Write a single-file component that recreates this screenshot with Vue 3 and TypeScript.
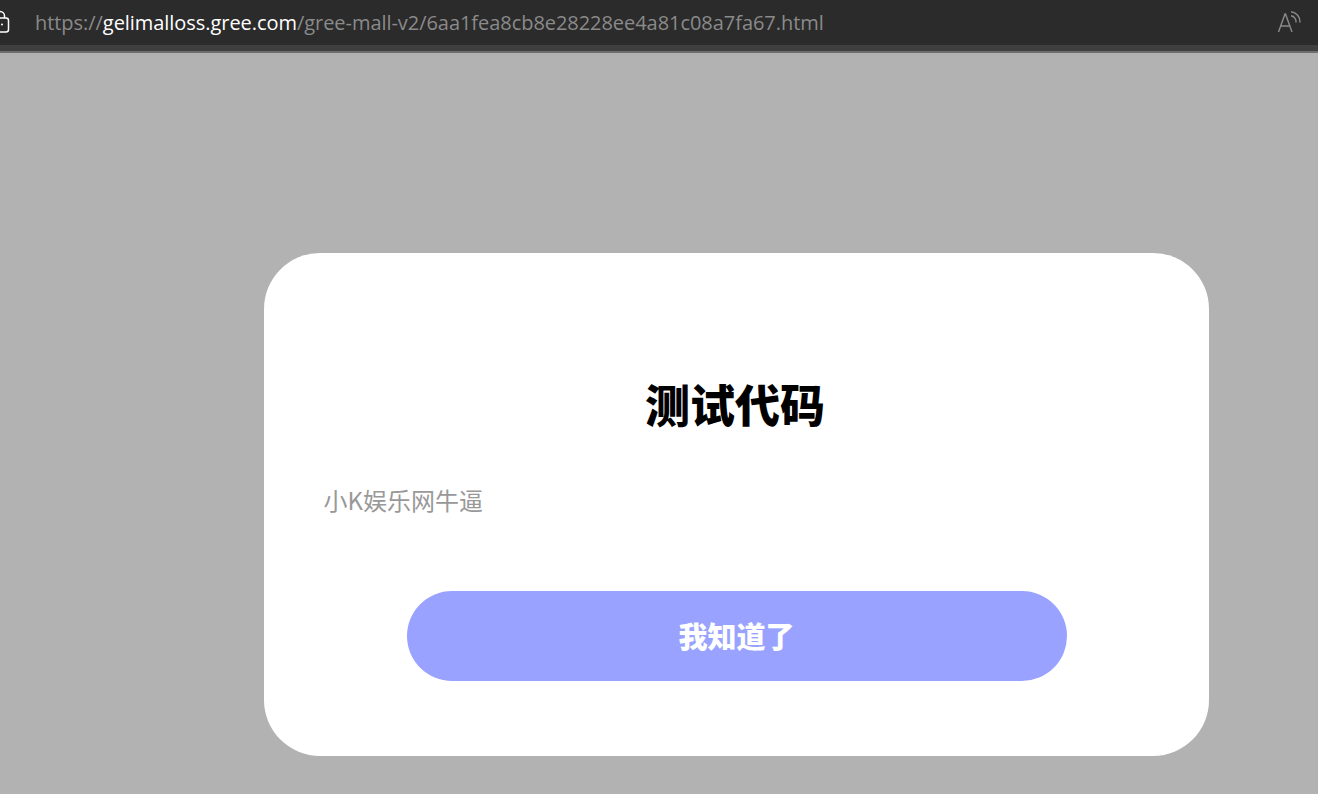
<script setup lang="ts">
const scheme = 'https://'
const host = 'gelimalloss.gree.com'
const path = '/gree-mall-v2/6aa1fea8cb8e28228ee4a81c08a7fa67.html'
</script>

<template>
  <div class="page">
    <header class="bar">
      <svg class="lock" width="12" height="24" viewBox="0 0 12 24" fill="none" stroke="#fff" stroke-width="1.5">
        <rect x="-6" y="7" width="14.5" height="14" rx="2.5" />
        <path d="M-4.500 7V5a4.500 4.500 0 0 1 9 0V7" />
        <circle cx="2" cy="13.500" r="1" fill="#fff" stroke="none" />
      </svg>
      <div class="url"><span class="dim">{{ scheme }}</span><span class="host">{{ host }}</span><span class="dim">{{ path }}</span></div>
      <svg class="read" width="24" height="24" viewBox="0 0 24 24" fill="none" stroke="#8b8b8b" stroke-width="1.400">
        <path d="M1.500 21 L8 3 L8.500 3 L15 21 M3.800 15 H12.700" />
        <path d="M14 0.800a10 10 0 0 1 9 10.700M14 4.800a6 6 0 0 1 5 6.700" />
      </svg>
    </header>
    <div class="shade"></div>
    <main class="stage">
      <section class="card">
        <h1 class="title">测试代码</h1>
        <p class="body">小K娱乐网牛逼</p>
        <button class="ok" type="button">我知道了</button>
      </section>
    </main>
  </div>
</template>

<style scoped>
.page {
  width: 1318px;
  height: 794px;
  overflow: hidden;
  display: flex;
  flex-direction: column;
  background: #b2b2b2;
  font-family: "Open Sans", "Noto Sans", "Noto Sans CJK SC", sans-serif;
}
.bar {
  height: 45px;
  flex: none;
  display: flex;
  align-items: center;
  background: #2b2b2b;
  padding-right: 17px;
  box-sizing: border-box;
}
.lock {
  flex: none;
  overflow: visible;
  margin-right: 23px;
}
.url {
  flex: 1;
  font-size: 20px;
  white-space: nowrap;
  letter-spacing: -0.05px;
}
.dim { color: #8a8a8a; }
.host { color: #fff; }
.read { flex: none; overflow: visible; }
.shade {
  height: 8px;
  flex: none;
  background: #3f3f3f;
  border-bottom: 2px solid #6e6e6e;
  box-sizing: border-box;
}
.stage {
  flex: 1;
  padding: 200px 0 0 263.5px;
}
.card {
  width: 945px;
  height: 503px;
  box-sizing: border-box;
  background: #fff;
  border-radius: 56px;
  padding-top: 126px;
  display: flex;
  flex-direction: column;
}
.title {
  margin: 0;
  font-size: 45px;
  line-height: 50px;
  font-weight: 900;
  text-align: center;
  color: #000;
  font-family: "Noto Sans CJK SC", sans-serif;
  width: 943px;
}
.body {
  margin: 46px 0 0 60px;
  font-size: 24px;
  line-height: 50px;
  color: #999;
  font-family: "Noto Sans CJK SC", sans-serif;
}
.ok {
  margin: 66px 0 0 143px;
  width: 660px;
  height: 90px;
  border: 0;
  border-radius: 45px;
  background: #99a3ff;
  color: #fff;
  font-size: 29px;
  font-weight: 900;
  font-family: "Noto Sans CJK SC", sans-serif;
  padding: 0 0 2px;
}
</style>
